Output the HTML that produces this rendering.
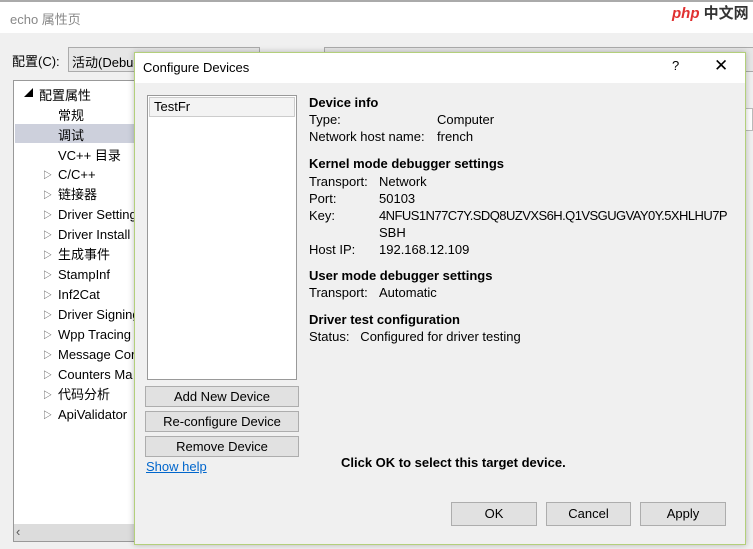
<!DOCTYPE html>
<html><head><meta charset="utf-8"><style>
*{margin:0;padding:0;box-sizing:border-box}
body{width:753px;height:549px;overflow:hidden;background:#f0f0f0;font-family:"Segoe UI","Liberation Sans","Noto Sans CJK SC",sans-serif;font-size:13px;color:#000;position:relative}
.a{position:absolute;white-space:nowrap}
.btn{position:absolute;background:#e1e1e1;border:1px solid #adadad;text-align:center;font-size:13px;line-height:19px}
.b{font-weight:bold}
</style></head><body>
<div class="a" style="left:0;top:0;width:753px;height:33px;background:#fff;border-top:2px solid #aaa"></div>
<div class="a" style="left:10px;top:9px;color:#888">echo 属性页</div>
<div class="a" style="left:12px;top:51px">配置(C):</div>
<div class="a" style="left:68px;top:47px;width:192px;height:25px;border:1px solid #ababab;background:#e6e6e6;padding:4px 3px">活动(Debug</div>
<div class="a" style="left:324px;top:47px;width:430px;height:25px;border:1px solid #ababab;background:#e6e6e6"></div>
<div class="a" style="left:13px;top:80px;width:125px;height:462px;background:#fff;border:1px solid #999"></div>
<div class="a" style="left:15px;top:124px;width:122px;height:19px;background:#cdd0dc"></div>
<div class="a" style="left:14px;top:524px;width:122px;height:17px;background:#dcdcdc"></div>
<div class="a" style="left:16px;top:524px;color:#555">‹</div>
<div class="a" style="left:24px;top:86px;font-size:9px">◢</div>
<div class="a" style="left:39px;top:85px">配置属性</div>
<div class="a" style="left:58px;top:105px">常规</div>
<div class="a" style="left:58px;top:125px">调试</div>
<div class="a" style="left:58px;top:145px">VC++ 目录</div>
<div class="a" style="left:43px;top:165px;line-height:20px;font-size:9px;color:#444">
▷<br>▷<br>▷<br>▷<br>▷<br>▷<br>▷<br>▷<br>▷<br>▷<br>▷<br>▷<br>▷</div>
<div class="a" style="left:58px;top:165px;line-height:20px;font-size:13px">C/C++<br>链接器<br>Driver Setting<br>Driver Install<br>生成事件<br>StampInf<br>Inf2Cat<br>Driver Signing<br>Wpp Tracing<br>Message Cor<br>Counters Ma<br>代码分析<br>ApiValidator</div>
<div class="a" style="left:744px;top:108px;width:9px;height:23px;border:1px solid #bbb;background:#fff"></div>
<div class="a" style="left:672px;top:2px;color:#e03030;font-weight:bold;font-size:15px;font-style:italic">php<span style="color:#333;font-style:normal"> 中文网</span></div>
<!-- dialog -->
<div class="a" style="left:134px;top:52px;width:612px;height:493px;background:#f0f0f0;border:1px solid #b3cf7b;box-shadow:0 0 6px rgba(0,0,0,.25)"></div>
<div class="a" style="left:135px;top:53px;width:610px;height:30px;background:#fff"></div>
<div class="a" style="left:143px;top:60px">Configure Devices</div>
<div class="a" style="left:672px;top:58px">?</div>
<div class="a" style="left:714px;top:56px;font-size:17px">✕</div>
<div class="a" style="left:147px;top:95px;width:150px;height:285px;background:#fff;border:1px solid #999"></div>
<div class="a" style="left:149px;top:97px;width:146px;height:20px;background:#f3f3f3;border:1px solid #ccc;padding:1px 4px">TestFr</div>
<div class="btn" style="left:145px;top:386px;width:154px;height:21px">Add New Device</div>
<div class="btn" style="left:145px;top:411px;width:154px;height:21px">Re-configure Device</div>
<div class="btn" style="left:145px;top:436px;width:154px;height:21px">Remove Device</div>
<div class="a" style="left:146px;top:459px;color:#0066cc;text-decoration:underline">Show help</div>
<div class="a b" style="left:309px;top:95px">Device info</div>
<div class="a" style="left:309px;top:112px">Type:</div><div class="a" style="left:437px;top:112px">Computer</div>
<div class="a" style="left:309px;top:129px">Network host name:</div><div class="a" style="left:437px;top:129px">french</div>
<div class="a b" style="left:309px;top:156px">Kernel mode debugger settings</div>
<div class="a" style="left:309px;top:173px;line-height:17px">Transport:<br>Port:<br>Key:<br><br>Host IP:</div>
<div class="a" style="left:379px;top:173px;line-height:17px">Network<br>50103<br><span style="letter-spacing:-0.55px">4NFUS1N77C7Y.SDQ8UZVXS6H.Q1VSGUGVAY0Y.5XHLHU7P</span><br>SBH<br>192.168.12.109</div>
<div class="a b" style="left:309px;top:268px">User mode debugger settings</div>
<div class="a" style="left:309px;top:285px">Transport:</div><div class="a" style="left:379px;top:285px">Automatic</div>
<div class="a b" style="left:309px;top:312px">Driver test configuration</div>
<div class="a" style="left:309px;top:329px">Status:&nbsp;&nbsp; Configured for driver testing</div>
<div class="a b" style="left:341px;top:455px">Click OK to select this target device.</div>
<div class="btn" style="left:451px;top:502px;width:86px;height:24px;line-height:22px">OK</div>
<div class="btn" style="left:546px;top:502px;width:85px;height:24px;line-height:22px">Cancel</div>
<div class="btn" style="left:640px;top:502px;width:86px;height:24px;line-height:22px">Apply</div>
</body></html>
